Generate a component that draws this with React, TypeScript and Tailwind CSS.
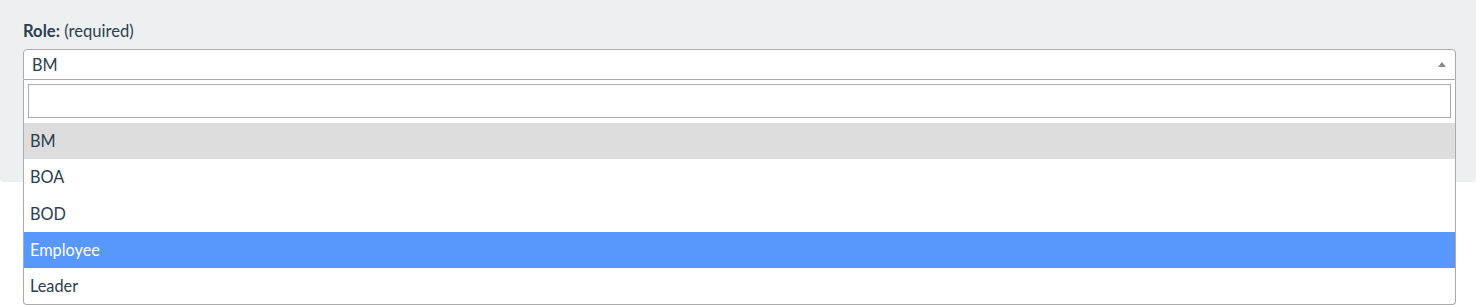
const options = ["BM", "BOA", "BOD", "Employee", "Leader"];

export default function App() {
  const selected = "BM";
  const highlighted = "Employee";

  return (
    <div
      className="h-[305px] w-full bg-white text-[#2c3e50]"
      style={{ fontFamily: "Lato, 'Open Sans', sans-serif" }}
    >
      <div className="h-[182px] rounded-b-[4px] bg-[#ecf0f1] px-[23px] pt-[21px] pr-[20px]">
        <label className="block text-[16.6px] leading-[21px]">
          <span className="font-bold">Role:</span> (required)
        </label>

        <div className="relative mt-[7px] w-[1433px]">
          <div className="flex h-[31px] items-center justify-between rounded-t-[4px] border border-[#aaa] bg-white pl-[8px] pr-[8px]">
            <span className="text-[16.3px] leading-[28px]">{selected}</span>
            <span className="mr-[1px] h-0 w-0 border-x-[4px] border-b-[5px] border-x-transparent border-b-[#888]" />
          </div>

          <div className="absolute left-0 right-0 top-[31px] z-10 rounded-b-[4px] border-x border-b border-[#aaa] bg-white">
            <div className="px-[4px] pt-[4px] pb-[5px]">
              <input
                type="text"
                className="block h-[34px] w-full border border-[#aaa] bg-white px-[4px] text-[16px] outline-none"
              />
            </div>
            <ul>
              {options.map((o) => (
                <li
                  key={o}
                  className={
                    o === highlighted
                      ? "flex h-[36.3px] items-center bg-[#5897fb] pl-[6px] text-[16.3px] text-white"
                      : o === selected
                        ? "flex h-[36.3px] items-center bg-[#ddd] pl-[6px] text-[16.3px]"
                        : "flex h-[36.3px] items-center pl-[6px] text-[16.3px]"
                  }
                >
                  {o}
                </li>
              ))}
            </ul>
          </div>
        </div>
      </div>
    </div>
  );
}
